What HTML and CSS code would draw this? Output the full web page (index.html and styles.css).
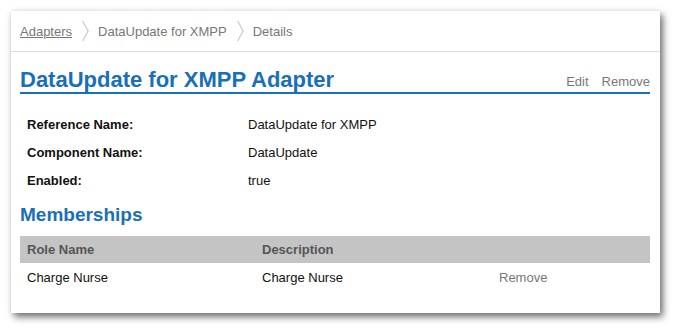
FILE: index.html
```html
<!DOCTYPE html>
<html lang="en">
<head>
    <meta charset="UTF-8">
    <title>DataUpdate for XMPP Adapter</title>
    <link rel="stylesheet" href="styles.css">
</head>
<body>
    <div class="window">
        <div class="crumbs">
            <a href="#">Adapters</a>
            <span class="sep"></span>
            <span>DataUpdate for XMPP</span>
            <span class="sep"></span>
            <span>Details</span>
        </div>
        <div class="content">
            <div class="title-row">
                <h1>DataUpdate for XMPP Adapter</h1>
                <div class="actions">
                    <a href="#">Edit</a>
                    <a href="#">Remove</a>
                </div>
            </div>
            <dl class="details">
                <dt>Reference Name:</dt>
                <dd>DataUpdate for XMPP</dd>
                <dt>Component Name:</dt>
                <dd>DataUpdate</dd>
                <dt>Enabled:</dt>
                <dd>true</dd>
            </dl>
            <h2>Memberships</h2>
            <table class="members">
                <thead>
                    <tr>
                        <th class="col-role">Role Name</th>
                        <th class="col-desc">Description</th>
                        <th></th>
                    </tr>
                </thead>
                <tbody>
                    <tr>
                        <td>Charge Nurse</td>
                        <td>Charge Nurse</td>
                        <td><a href="#">Remove</a></td>
                    </tr>
                </tbody>
            </table>
        </div>
    </div>
</body>
</html>
```

FILE: styles.css
```css
body {
    font-family: "Liberation Sans", Arial, sans-serif;
    background-color: #fff;
    margin: 0;
    padding: 11px;
}
a {
    color: #777;
    text-decoration: none;
}
.window {
    width: 649px;
    height: 302px;
    background: #fff;
    box-shadow: 3px 4px 7px rgba(0, 0, 0, 0.55), 0 0 6px rgba(0, 0, 0, 0.08);
}
.crumbs {
    display: flex;
    align-items: center;
    gap: 11px;
    height: 40px;
    padding: 0 9px;
    border-bottom: 1px solid #ddd;
    font-size: 13px;
    color: #777;
}
.crumbs a {
    text-decoration: underline;
}
.sep {
    width: 7px;
    height: 7px;
    border-top: 1px solid #ccc;
    border-right: 1px solid #ccc;
    transform: scaleY(1.9) rotate(45deg);
    margin-left: -4px;
}
.content {
    padding: 0 10px 0 9px;
}
.title-row {
    display: flex;
    justify-content: space-between;
    align-items: flex-end;
    border-bottom: 2px solid #1a6fb9;
    padding-top: 16px;
    padding-bottom: 0;
}
h1 {
    margin: 0;
    font-size: 22px;
    color: #1a6fb9;
    line-height: 24px;
}
.actions {
    display: flex;
    gap: 13px;
    font-size: 13px;
    padding-bottom: 3px;
}
.details {
    display: grid;
    grid-template-columns: 221px 1fr;
    row-gap: 12px;
    margin: 23px 0 0 7px;
    font-size: 13px;
    line-height: 16px;
}
.details dt {
    font-weight: bold;
    color: #111;
}
.details dd {
    margin: 0;
    color: #111;
}
h2 {
    margin: 15px 0 10px;
    font-size: 19px;
    line-height: 22px;
    color: #1a6fb9;
}
.members {
    width: 100%;
    border-collapse: collapse;
    font-size: 13px;
}
.members th {
    background-color: #c4c4c4;
    color: #555;
    text-align: left;
    height: 27px;
    padding: 0 7px;
}
.members td {
    height: 28px;
    padding: 0 7px;
    color: #111;
}
.col-role {
    width: 221px;
}
.col-desc {
    width: 223px;
}
```
